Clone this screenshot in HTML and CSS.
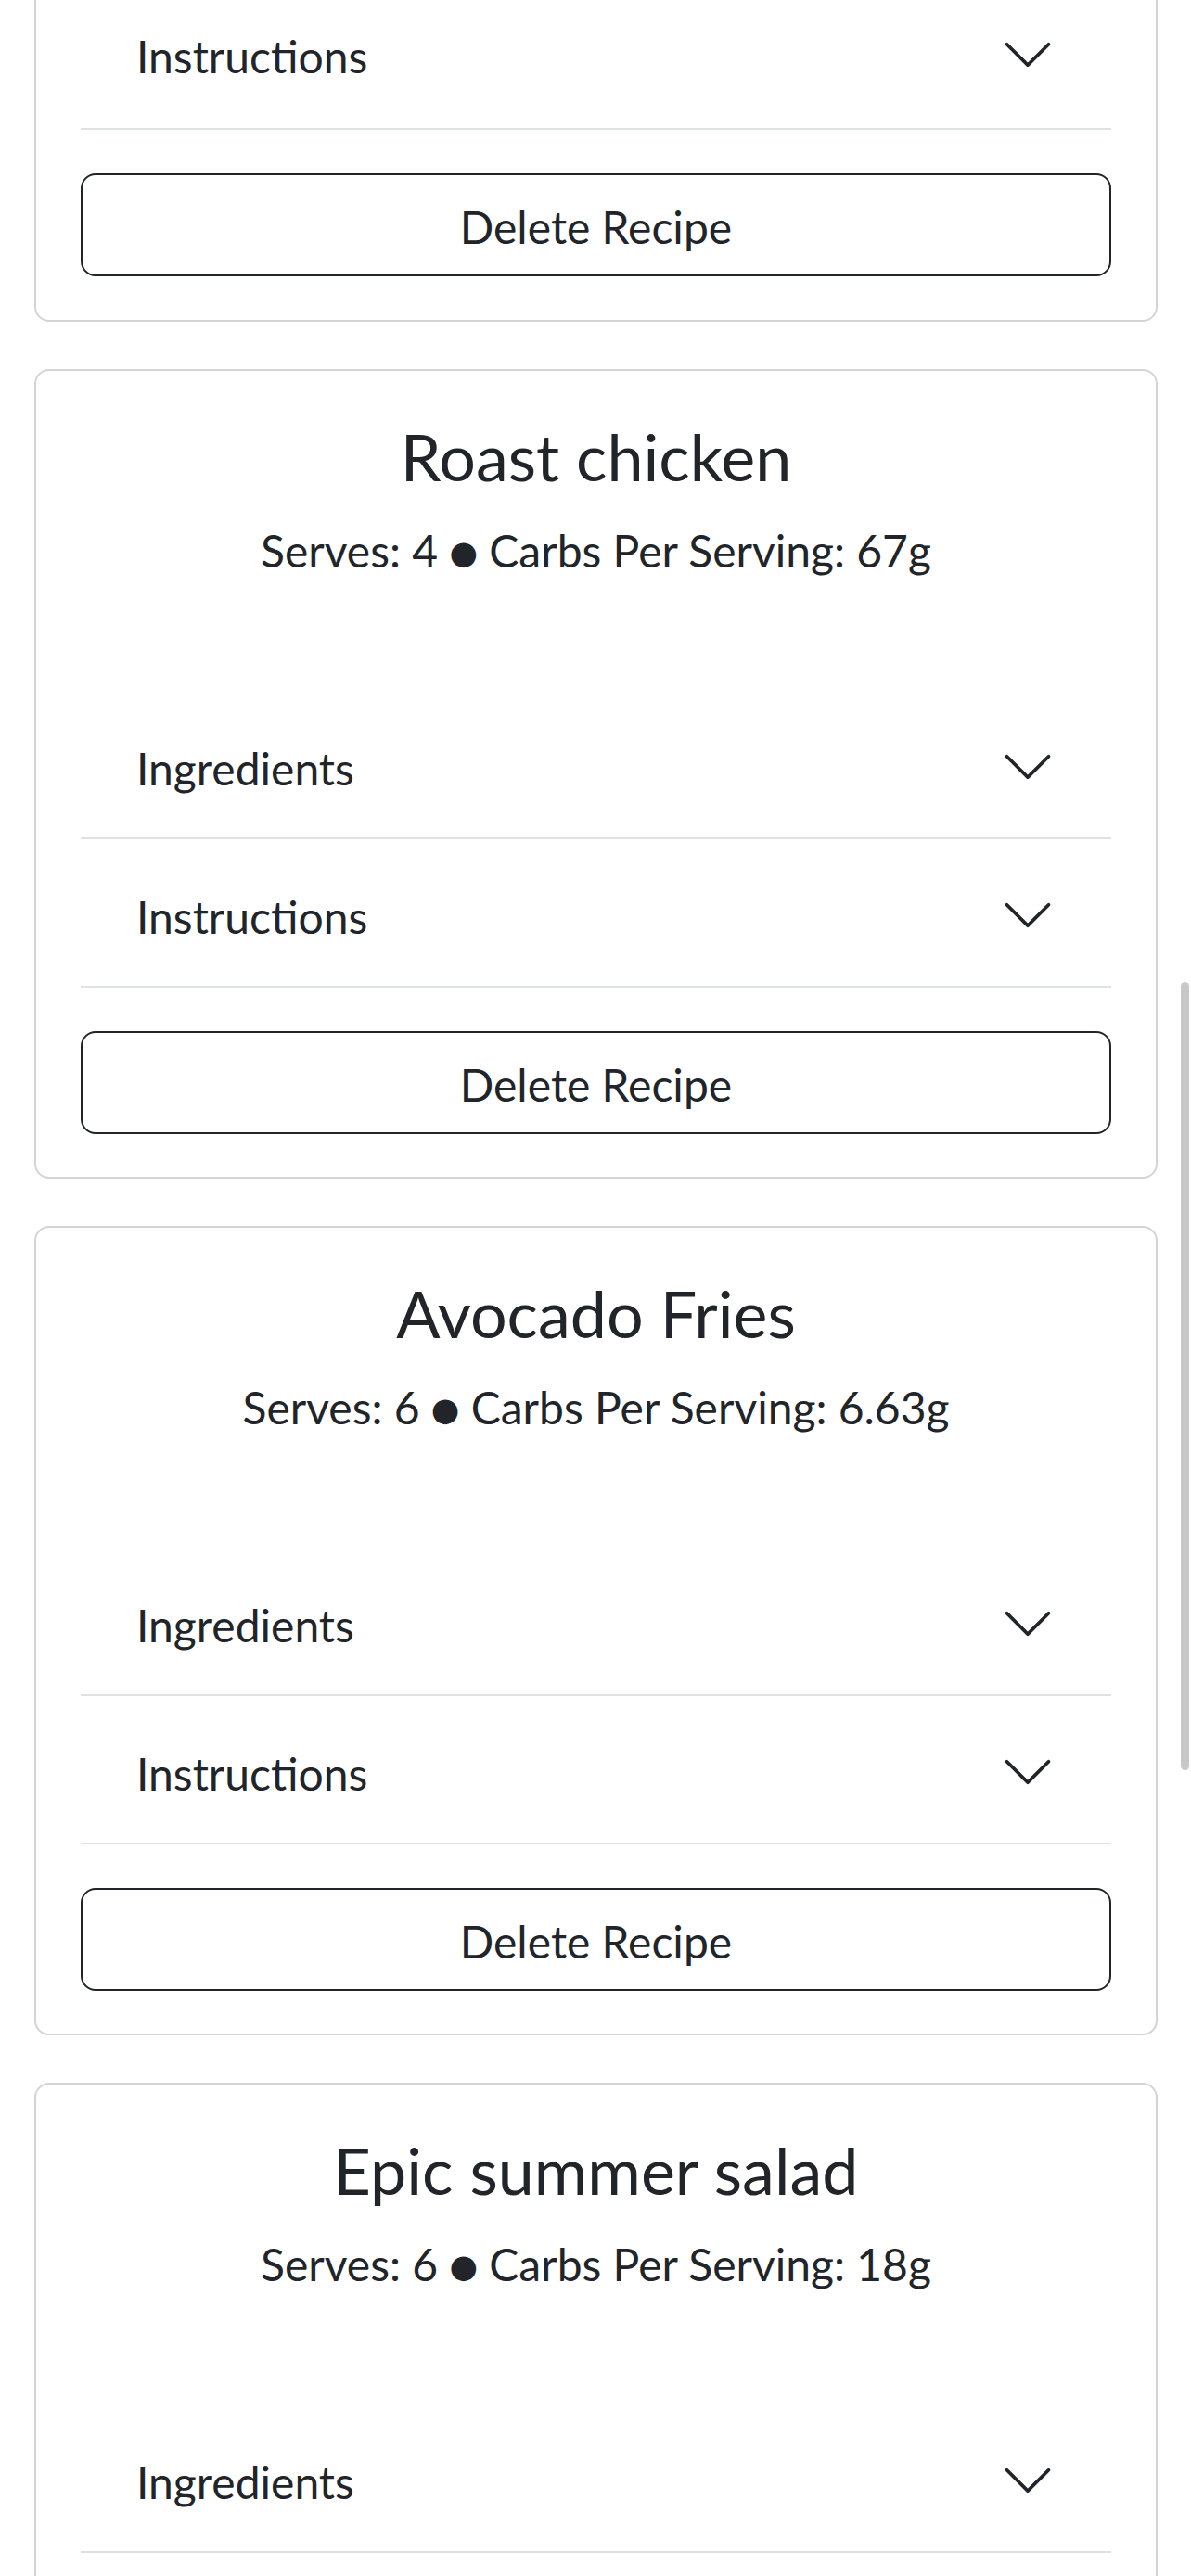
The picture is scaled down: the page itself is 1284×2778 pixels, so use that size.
FILE: index.html
```html
<!DOCTYPE html>
<html lang="en">
<head>
<meta charset="utf-8">
<meta name="viewport" content="width=device-width, initial-scale=1">
<title>Recipes</title>
<link rel="stylesheet" href="styles.css">
</head>
<body>
<main class="recipes">
  <section class="card card--tail">
    <div class="accordion">
      <div class="acc-item">
        <button class="acc-btn" type="button"><span>Instructions</span><svg class="chev" viewBox="0 0 16 16"><path d="M1.646 4.646a.5.5 0 0 1 .708 0L8 10.293l5.646-5.647a.5.5 0 0 1 .708.708l-6 6a.5.5 0 0 1-.708 0l-6-6a.5.5 0 0 1 0-.708z"/></svg></button>
      </div>
    </div>
    <button class="delete" type="button">Delete Recipe</button>
  </section>

  <section class="card">
    <h2 class="title">Roast chicken</h2>
    <p class="meta">Serves: 4 <span class="dot">●</span> Carbs Per Serving: 67g</p>
    <div class="accordion">
      <div class="acc-item">
        <button class="acc-btn" type="button"><span>Ingredients</span><svg class="chev" viewBox="0 0 16 16"><path d="M1.646 4.646a.5.5 0 0 1 .708 0L8 10.293l5.646-5.647a.5.5 0 0 1 .708.708l-6 6a.5.5 0 0 1-.708 0l-6-6a.5.5 0 0 1 0-.708z"/></svg></button>
      </div>
      <div class="acc-item">
        <button class="acc-btn" type="button"><span>Instructions</span><svg class="chev" viewBox="0 0 16 16"><path d="M1.646 4.646a.5.5 0 0 1 .708 0L8 10.293l5.646-5.647a.5.5 0 0 1 .708.708l-6 6a.5.5 0 0 1-.708 0l-6-6a.5.5 0 0 1 0-.708z"/></svg></button>
      </div>
    </div>
    <button class="delete" type="button">Delete Recipe</button>
  </section>

  <section class="card">
    <h2 class="title">Avocado Fries</h2>
    <p class="meta">Serves: 6 <span class="dot">●</span> Carbs Per Serving: 6.63g</p>
    <div class="accordion">
      <div class="acc-item">
        <button class="acc-btn" type="button"><span>Ingredients</span><svg class="chev" viewBox="0 0 16 16"><path d="M1.646 4.646a.5.5 0 0 1 .708 0L8 10.293l5.646-5.647a.5.5 0 0 1 .708.708l-6 6a.5.5 0 0 1-.708 0l-6-6a.5.5 0 0 1 0-.708z"/></svg></button>
      </div>
      <div class="acc-item">
        <button class="acc-btn" type="button"><span>Instructions</span><svg class="chev" viewBox="0 0 16 16"><path d="M1.646 4.646a.5.5 0 0 1 .708 0L8 10.293l5.646-5.647a.5.5 0 0 1 .708.708l-6 6a.5.5 0 0 1-.708 0l-6-6a.5.5 0 0 1 0-.708z"/></svg></button>
      </div>
    </div>
    <button class="delete" type="button">Delete Recipe</button>
  </section>

  <section class="card card--head">
    <h2 class="title">Epic summer salad</h2>
    <p class="meta">Serves: 6 <span class="dot">●</span> Carbs Per Serving: 18g</p>
    <div class="accordion">
      <div class="acc-item">
        <button class="acc-btn" type="button"><span>Ingredients</span><svg class="chev" viewBox="0 0 16 16"><path d="M1.646 4.646a.5.5 0 0 1 .708 0L8 10.293l5.646-5.647a.5.5 0 0 1 .708.708l-6 6a.5.5 0 0 1-.708 0l-6-6a.5.5 0 0 1 0-.708z"/></svg></button>
      </div>
    </div>
  </section>
</main>
<div class="scroll-indicator"></div>
</body>
</html>
```

FILE: styles.css
```css
html {
  overflow: hidden;
  background: #fff;
}

body {
  margin: 0;
  height: 100vh;
  overflow: hidden;
  background: #fff;
  color: #212529;
  font-family: "Lato", "Noto Sans", "Liberation Sans", sans-serif;
  font-size: 48px;
  line-height: 72px;
}

.recipes {
  margin-top: -22px;
  padding: 0 36px 0 37px;
}

.card {
  border: 2px solid #d4d4d4;
  border-radius: 16px;
  padding: 0 48px 46px;
  margin-bottom: 51px;
  background: #fff;
}

.card--tail {
  padding-bottom: 47px;
}

.card--tail .accordion {
  margin-top: 0;
}

.card--tail .acc-btn {
  padding-top: 49px;
  padding-bottom: 45px;
}

.title {
  margin: 50px 0 0;
  font-size: 70px;
  line-height: 84px;
  font-weight: 400;
  text-align: center;
}

.meta {
  margin: 24px 0 0;
  font-size: 48px;
  line-height: 72px;
  text-align: center;
}

.dot {
  font-family: "DejaVu Sans", sans-serif;
  font-size: 35px;
  line-height: 0;
  vertical-align: 4px;
}

.accordion {
  margin-top: 115px;
}

.acc-item {
  border-bottom: 2px solid #dee2e6;
}

.acc-btn {
  display: flex;
  align-items: flex-start;
  justify-content: space-between;
  width: 100%;
  margin: 0;
  padding: 52px 60px 42px;
  border: 0;
  background: transparent;
  color: #212529;
  font-family: inherit;
  font-size: 48px;
  line-height: 64px;
  text-align: left;
}

.chev {
  width: 60px;
  height: 60px;
  flex-shrink: 0;
  fill: #212529;
}

.delete {
  display: block;
  width: 100%;
  margin: 47px 0 0;
  padding: 24px 36px 19px;
  border: 2px solid #212529;
  border-radius: 16px;
  background: #fff;
  color: #212529;
  font-family: inherit;
  font-size: 48px;
  line-height: 64px;
  text-align: center;
}

.scroll-indicator {
  position: fixed;
  top: 1059px;
  right: 2px;
  width: 9px;
  height: 850px;
  border-radius: 5px;
  background: #c8c8c8;
}
```
